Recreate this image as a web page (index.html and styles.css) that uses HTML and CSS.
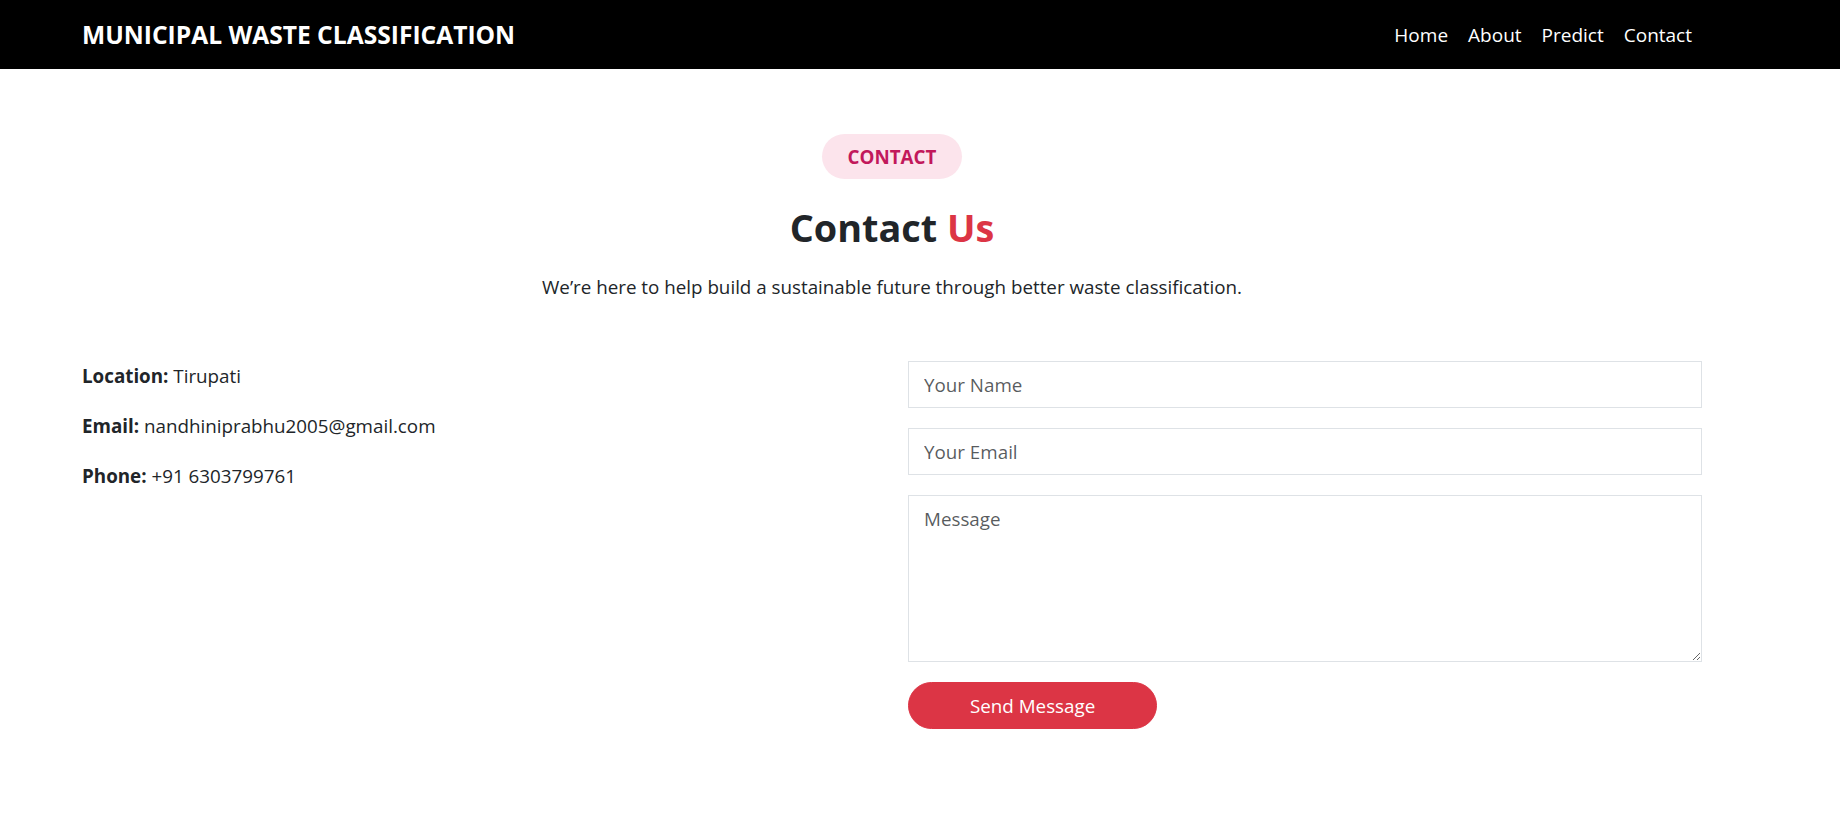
FILE: index.html
```html
<!DOCTYPE html>
<html lang="en">
<head>
<meta charset="utf-8">
<title>Contact - Municipal Waste Classification</title>
<link rel="stylesheet" href="styles.css">
</head>
<body>
<nav class="navbar">
  <div class="container nav-inner">
    <a class="brand" href="#">MUNICIPAL WASTE CLASSIFICATION</a>
    <ul class="nav-links">
      <li><a href="#">Home</a></li>
      <li><a href="#">About</a></li>
      <li><a href="#">Predict</a></li>
      <li><a href="#">Contact</a></li>
    </ul>
  </div>
</nav>

<section class="contact">
  <div class="container">
    <header class="section-head">
      <span class="badge">CONTACT</span>
      <h2 class="title">Contact <span class="accent">Us</span></h2>
      <p class="subtitle">We’re here to help build a sustainable future through better waste classification.</p>
    </header>

    <div class="contact-row">
      <div class="info">
        <p><strong>Location:</strong> Tirupati</p>
        <p><strong>Email:</strong> nandhiniprabhu2005@gmail.com</p>
        <p><strong>Phone:</strong> +91 6303799761</p>
      </div>
      <form class="contact-form">
        <input class="field" type="text" placeholder="Your Name">
        <input class="field" type="email" placeholder="Your Email">
        <textarea class="field area" placeholder="Message"></textarea>
        <div><button type="button" class="send">Send Message</button></div>
      </form>
    </div>
  </div>
</section>
</body>
</html>
```
FILE: styles.css
```css
* { box-sizing: border-box; }

body {
  margin: 0;
  font-family: "Open Sans", "Noto Sans", sans-serif;
  font-size: 18.8px;
  line-height: 30px;
  color: #212529;
  background: #fff;
}

.container {
  width: 1620px;
  margin-left: 82px;
}

/* Navbar */
.navbar {
  background: #000;
  height: 69px;
}
.nav-inner {
  height: 100%;
  display: flex;
  align-items: center;
  justify-content: space-between;
}
.brand {
  color: #fff;
  text-decoration: none;
  font-weight: 700;
  font-size: 24.6px;
  line-height: 37px;
  margin-top: -1px;
}
.nav-links {
  list-style: none;
  margin: 0;
  padding: 0;
  display: flex;
}
.nav-links a {
  display: block;
  color: #fff;
  text-decoration: none;
  font-size: 19px;
  padding: 0 10px;
  line-height: 30px;
}

/* Section */
.contact {
  padding-top: 65px;
}
.section-head {
  display: flex;
  flex-direction: column;
  align-items: center;
  text-align: center;
}
.badge {
  display: inline-block;
  background: #fce4ec;
  color: #c2185b;
  font-weight: 700;
  font-size: 18.8px;
  line-height: 25px;
  padding: 11px 26px 9px;
  border-radius: 30px;
}
.title {
  margin: 25px 0 0;
  font-size: 37.8px;
  line-height: 48px;
  font-weight: 700;
  color: #212529;
}
.accent { color: #dc3545; }
.subtitle {
  margin: 20px 0 0;
}

.contact-row {
  margin-top: 59px;
  display: grid;
  grid-template-columns: 1fr 1fr;
  column-gap: 30px;
}
.info p {
  margin: 0 0 20px;
}
.info strong { font-weight: 700; }

.contact-form {
  display: flex;
  flex-direction: column;
  gap: 20px;
  margin-left: 1px;
}
.field {
  display: block;
  width: 100%;
  height: 47px;
  border: 1px solid #dee2e6;
  border-radius: 0;
  padding: 7.5px 15px;
  font-family: inherit;
  font-size: 18.8px;
  line-height: 30px;
  color: #212529;
  background: #fff;
  outline: none;
}
.field::placeholder { color: rgba(33, 37, 41, 0.75); }
.area {
  height: 167px;
  resize: vertical;
}
.send {
  display: inline-block;
  background: #dc3545;
  color: #fff;
  border: 1px solid #dc3545;
  border-radius: 50px;
  font-family: inherit;
  font-size: 18.8px;
  line-height: 30px;
  padding: 7.5px 61px;
  cursor: pointer;
}
```
